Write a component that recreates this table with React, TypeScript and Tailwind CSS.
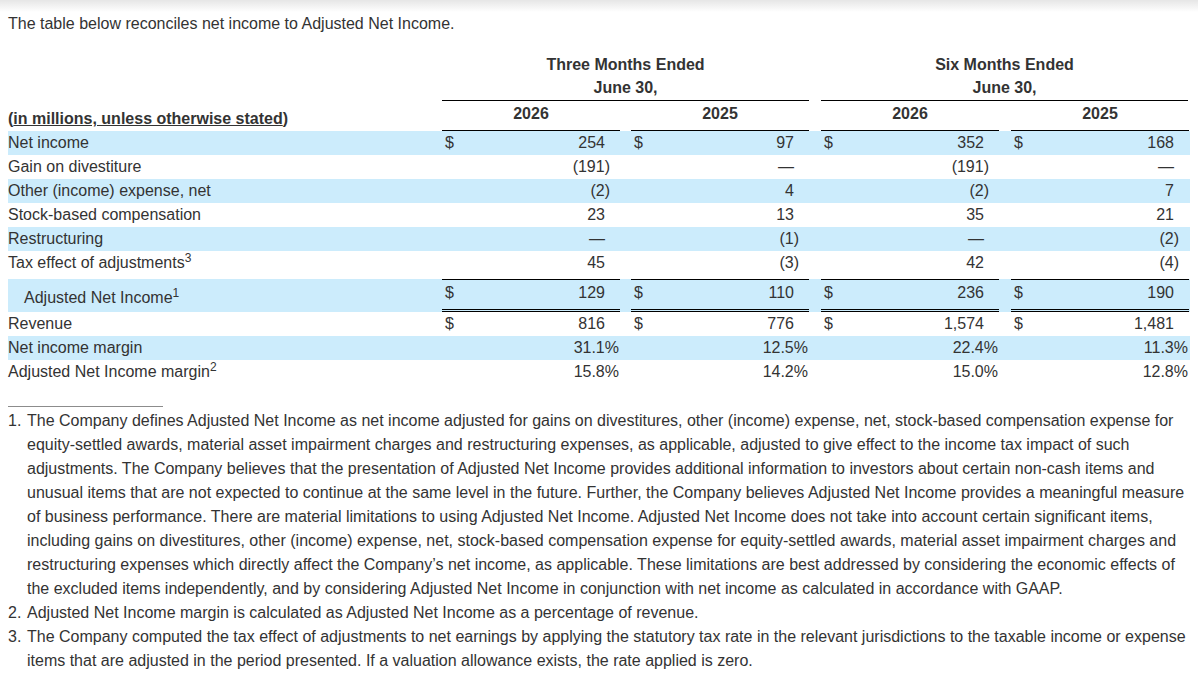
import React from "react";

type Row = {
  label: string;
  sup?: string;
  vals: string[];
  dollar?: boolean;
  hl?: boolean;
  tall?: boolean;
};

const rows: Row[] = [
  { label: "Net income", vals: ["254", "97", "352", "168"], dollar: true, hl: true },
  { label: "Gain on divestiture", vals: ["(191)", "—", "(191)", "—"] },
  { label: "Other (income) expense, net", vals: ["(2)", "4", "(2)", "7"], hl: true },
  { label: "Stock-based compensation", vals: ["23", "13", "35", "21"] },
  { label: "Restructuring", vals: ["—", "(1)", "—", "(2)"], hl: true },
  { label: "Tax effect of adjustments", sup: "3", vals: ["45", "(3)", "42", "(4)"], tall: true },
];

const tailRows: Row[] = [
  { label: "Revenue", vals: ["816", "776", "1,574", "1,481"], dollar: true },
  { label: "Net income margin", vals: ["31.1%", "12.5%", "22.4%", "11.3%"], hl: true },
  { label: "Adjusted Net Income margin", sup: "2", vals: ["15.8%", "14.2%", "15.0%", "12.8%"] },
];

const gaps = ["", "ml-[11px]", "ml-[12px]", "ml-[12px]"];

function padFor(v: string) {
  if (v.endsWith("%")) return "pr-[1px]";
  if (v.endsWith(")")) return "pr-[10px]";
  return "pr-[15px]";
}

function Cell({ v, dollar, i, extra = "" }: { v: string; dollar?: boolean; i: number; extra?: string }) {
  return (
    <div className={`w-[178px] flex justify-between ${gaps[i]} ${extra}`}>
      <span className="pl-[3px]">{dollar ? "$" : ""}</span>
      <span className={padFor(v)}>{v}</span>
    </div>
  );
}

function DataRow({ row }: { row: Row }) {
  return (
    <div className={`flex leading-[24px] ${row.tall ? "h-[28px]" : "h-[24px]"} ${row.hl ? "bg-[#ccecfc]" : ""}`}>
      <div className="w-[434px]">
        {row.label}
        {row.sup && <sup className="text-[12px]">{row.sup}</sup>}
      </div>
      {row.vals.map((v, i) => (
        <Cell key={i} v={v} i={i} dollar={row.dollar} />
      ))}
    </div>
  );
}

const notes: string[][] = [
  [
    "The Company defines Adjusted Net Income as net income adjusted for gains on divestitures, other (income) expense, net, stock-based compensation expense for",
    "equity-settled awards, material asset impairment charges and restructuring expenses, as applicable, adjusted to give effect to the income tax impact of such",
    "adjustments. The Company believes that the presentation of Adjusted Net Income provides additional information to investors about certain non-cash items and",
    "unusual items that are not expected to continue at the same level in the future. Further, the Company believes Adjusted Net Income provides a meaningful measure",
    "of business performance. There are material limitations to using Adjusted Net Income. Adjusted Net Income does not take into account certain significant items,",
    "including gains on divestitures, other (income) expense, net, stock-based compensation expense for equity-settled awards, material asset impairment charges and",
    "restructuring expenses which directly affect the Company’s net income, as applicable. These limitations are best addressed by considering the economic effects of",
    "the excluded items independently, and by considering Adjusted Net Income in conjunction with net income as calculated in accordance with GAAP.",
  ],
  ["Adjusted Net Income margin is calculated as Adjusted Net Income as a percentage of revenue."],
  [
    "The Company computed the tax effect of adjustments to net earnings by applying the statutory tax rate in the relevant jurisdictions to the taxable income or expense",
    "items that are adjusted in the period presented. If a valuation allowance exists, the rate applied is zero.",
  ],
];

export default function App() {
  const adjusted = ["129", "110", "236", "190"];

  return (
    <div className="w-[1198px] h-[680px] overflow-hidden bg-white text-[#333333] text-[16px] font-['Liberation_Sans',Arial,sans-serif]">
      <div className="h-[12px] bg-gradient-to-b from-[#e6e6e6] to-white" />
      <div className="px-[8px]">
        <p className="leading-[24px]">The table below reconciles net income to Adjusted Net Income.</p>

        {/* header */}
        <div className="flex mt-[16px] leading-[24px] font-bold">
          <div className="w-[434px]" />
          <div className="w-[367px] pt-[1px] text-center border-b border-black">
            <div>Three Months Ended</div>
            <div className="-mt-[1px]">June 30,</div>
          </div>
          <div className="w-[367px] pt-[1px] ml-[12px] text-center border-b border-black">
            <div>Six Months Ended</div>
            <div className="-mt-[1px]">June 30,</div>
          </div>
        </div>
        <div className="flex leading-[24px] font-bold">
          <div className="w-[434px] self-end">
            (<span className="underline">in millions, unless otherwise stated</span>)
          </div>
          {["2026", "2025", "2026", "2025"].map((y, i) => (
            <div key={i} className={`w-[178px] text-center pt-[1px] pb-[4px] border-b border-black ${gaps[i]}`}>
              {y}
            </div>
          ))}
        </div>

        {rows.map((r) => (
          <DataRow key={r.label} row={r} />
        ))}

        <div className="flex leading-[24px] bg-[#ccecfc]">
          <div className="w-[434px] pl-[16px] pt-[7px]">
            Adjusted Net Income<sup className="text-[12px]">1</sup>
          </div>
          {adjusted.map((v, i) => (
            <Cell
              key={i}
              v={v}
              i={i}
              dollar
              extra="h-[33px] pt-[1px] border-t border-black border-b-[3px] border-double border-b-black items-start"
            />
          ))}
        </div>

        {tailRows.map((r) => (
          <DataRow key={r.label} row={r} />
        ))}

        <div className="mt-[22px] w-[155px] h-px bg-[#8c8c8c]" />
        <div className="mt-[2px] leading-[24px]">
          {notes.map((lines, n) => (
            <div key={n} className="flex">
              <div className="w-[19px] shrink-0">{n + 1}.</div>
              <div className="whitespace-nowrap">
                {lines.map((l, k) => (
                  <div key={k}>{l}</div>
                ))}
              </div>
            </div>
          ))}
        </div>
      </div>
    </div>
  );
}
